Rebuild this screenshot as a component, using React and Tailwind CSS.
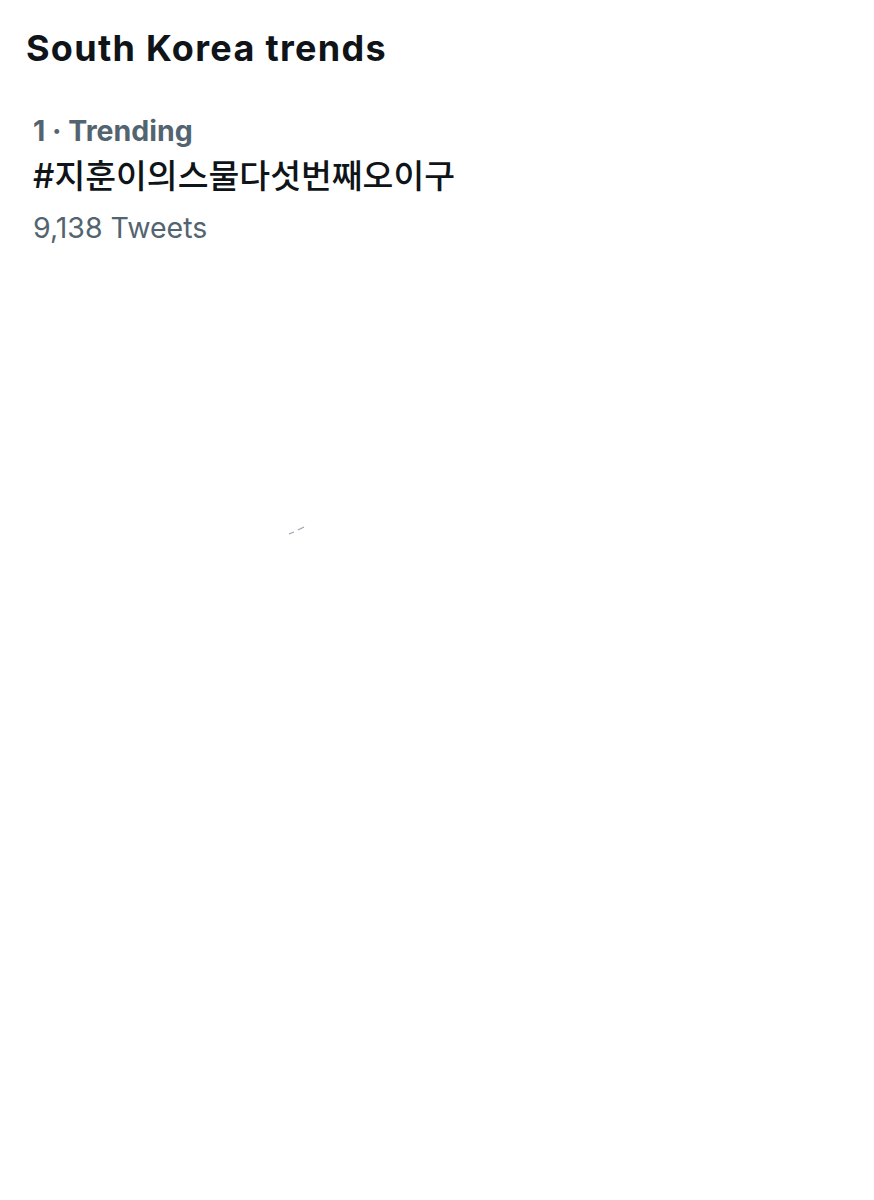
export default function App() {
  return (
    <div className="relative w-[874px] h-[1200px] bg-white" style={{ fontFamily: 'Inter, "Noto Sans CJK KR", sans-serif' }}>
      <div className="pl-[26px] pt-[26px]">
        <h1 className="text-[36px] leading-[44px] font-bold text-[#0f1419] tracking-[1.3px]">South Korea trends</h1>
      </div>
      <div className="pl-[33px] pt-[42px] flex flex-col">
        <div className="text-[28.5px] leading-[38px] font-bold text-[#536471]">1 · Trending</div>
        <div className="text-[33.5px] leading-[52px] font-medium text-[#0f1419]">#지훈이의스물다섯번째오이구</div>
        <div className="mt-[7px] text-[28.5px] leading-[38px] text-[#536471]">9,138 Tweets</div>
      </div>
      <svg className="absolute left-[286px] top-[524px]" width="22" height="12" viewBox="0 0 22 12">
        <line x1="3" y1="10" x2="8" y2="8" stroke="#9ca3af" strokeWidth="1.2" />
        <line x1="12" y1="6" x2="18" y2="3" stroke="#9ca3af" strokeWidth="1.2" />
      </svg>
    </div>
  );
}
